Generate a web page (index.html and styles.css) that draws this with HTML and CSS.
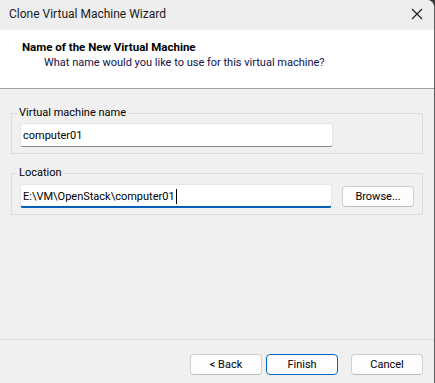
FILE: index.html
```html
<html>
<head>
<title>Clone Virtual Machine Wizard</title>
<link rel="stylesheet" href="styles.css">
</head>
<body>
<div class="window">
    <div class="titlebar">
        <span class="title">Clone Virtual Machine Wizard</span>
        <svg class="close" width="12" height="12" viewBox="0 0 12 12">
            <path d="M1 1 L11 11 M11 1 L1 11" stroke="#1a1a1a" stroke-width="1.1" fill="none"/>
        </svg>
    </div>
    <div class="header">
        <div class="heading">Name of the New Virtual Machine</div>
        <div class="subheading">What name would you like to use for this virtual machine?</div>
    </div>
    <div class="content">
        <fieldset class="group first">
            <legend>Virtual machine name</legend>
            <div class="field">computer01</div>
        </fieldset>
        <fieldset class="group second">
            <legend>Location</legend>
            <div class="row">
                <div class="field active">E:\VM\OpenStack\computer01<span class="caret"></span></div>
                <div class="button">Browse...</div>
            </div>
        </fieldset>
    </div>
    <div class="footer">
        <div class="button">&lt; Back</div>
        <div class="button default">Finish</div>
        <div class="button cancel">Cancel</div>
    </div>
</div>
</body>
</html>
```

FILE: styles.css
```css
html, body {
    margin: 0;
    padding: 0;
    background-color: #3a3a3a;
}
body {
    font-family: Roboto, "Liberation Sans", Arial, sans-serif;
    font-size: 11px;
    color: #000;
}
.window {
    width: 435px;
    height: 383px;
    box-sizing: border-box;
    border-right: 1px solid #5c5c5c;
    border-top-right-radius: 8px;
    overflow: hidden;
    background-color: #f0f0f0;
    display: flex;
    flex-direction: column;
}
.titlebar {
    height: 30px;
    flex: none;
    background-color: #eeeeee;
    display: flex;
    align-items: center;
    padding: 0 10px 2px 9px;
    box-sizing: border-box;
}
.title {
    flex: 1;
    font-size: 12px;
    color: #1a1a1a;
}
.close {
    margin-right: 1px;
}
.header {
    height: 59px;
    flex: none;
    box-sizing: border-box;
    background-color: #fff;
    border-bottom: 1px solid #a0a0a0;
    padding: 10px 0 0 22px;
    line-height: 15px;
}
.heading {
    font-weight: bold;
    font-size: 11.5px;
}
.subheading {
    padding-left: 22px;
    color: #10104a;
}
.content {
    flex: 1;
}
.group {
    margin: 0 11px;
    border: 1px solid #dcdcdc;
    padding: 2px 8px 6px;
}
.group.first {
    margin-top: 16px;
}
.group.second {
    margin-top: 11px;
    padding-top: 3px;
}
.group legend {
    padding: 0 2px;
    margin-left: -3px;
    line-height: 16px;
}
.field {
    width: 313px;
    height: 24px;
    box-sizing: border-box;
    background-color: #fff;
    border: 1px solid #e6e6e6;
    border-bottom-color: #868686;
    border-radius: 3px;
    padding: 0 2px;
    display: flex;
    align-items: center;
}
.field.active {
    width: 312px;
    border-bottom: 2px solid #005fb8;
    padding-top: 1px;
}
.caret {
    display: inline-block;
    width: 1px;
    height: 15px;
    background-color: #000;
    margin-left: 1px;
}
.row {
    display: flex;
    align-items: center;
    gap: 10px;
}
.button {
    width: 72px;
    height: 21px;
    box-sizing: border-box;
    background-color: #fdfdfd;
    border: 1px solid #d0d0d0;
    border-bottom-color: #bcbcbc;
    border-radius: 4px;
    display: flex;
    align-items: center;
    justify-content: center;
}
.button.default {
    border: 1px solid #0067c0;
}
.footer {
    height: 44px;
    flex: none;
    box-sizing: border-box;
    border-top: 1px solid #d9d9d9;
    padding: 14px 11px 0 0;
    display: flex;
    justify-content: flex-end;
    gap: 4px;
}
.button.cancel {
    margin-left: 9px;
}
```
